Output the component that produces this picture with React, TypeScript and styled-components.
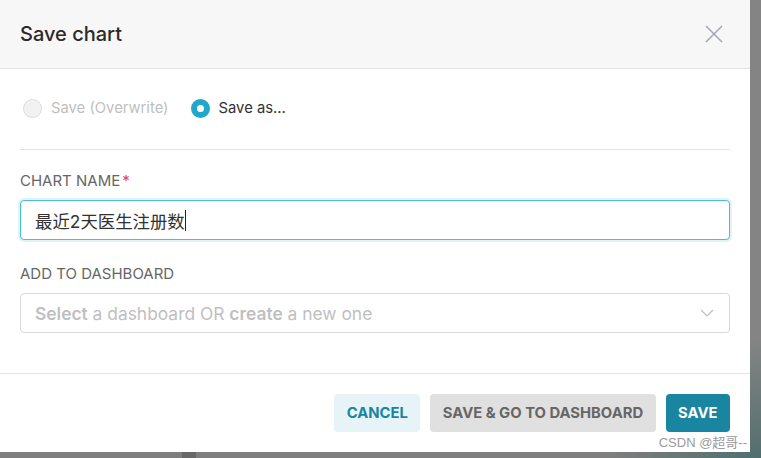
import React, { useState } from 'react';
import styled, { createGlobalStyle } from 'styled-components';

const GlobalStyle = createGlobalStyle`
  html, body {
    margin: 0;
    padding: 0;
    background: #828282;
    font-family: Inter, "Noto Sans CJK SC", sans-serif;
  }
  * { box-sizing: border-box; }
`;

const PRIMARY = '#1a85a0';

export default function App() {
  const [mode, setMode] = useState<'overwrite' | 'saveas'>('saveas');
  const [name, setName] = useState('最近2天医生注册数');

  return (
    <Page>
      <GlobalStyle />
      <Backdrop>
        <Modal>
          <Header>
            <Title>Save chart</Title>
            <CloseButton aria-label="close">
              <svg width="18" height="18" viewBox="0 0 18 18">
                <path d="M1 1L17 17M17 1L1 17" stroke="#a3a8b8" strokeWidth="1.6" />
              </svg>
            </CloseButton>
          </Header>
          <Body>
            <RadioRow>
              <RadioLabel disabled>
                <Radio checked={false} disabled />
                Save (Overwrite)
              </RadioLabel>
              <RadioLabel onClick={() => setMode('saveas')}>
                <Radio checked={mode === 'saveas'} />
                Save as...
              </RadioLabel>
            </RadioRow>
            <Divider />
            <FieldLabel>
              Chart name<Required>*</Required>
            </FieldLabel>
            <InputBox>
              <TextInput value={name} onChange={(e) => setName(e.target.value)} />
              <Caret />
            </InputBox>
            <FieldLabel>Add to dashboard</FieldLabel>
            <Select>
              <Placeholder>
                <b>Select</b> a dashboard OR <b>create</b> a new one
              </Placeholder>
              <svg width="14" height="8" viewBox="0 0 14 8">
                <path d="M1 1L7 7L13 1" stroke="#bdbdbd" strokeWidth="1.2" fill="none" />
              </svg>
            </Select>
          </Body>
          <Footer>
            <Button variant="secondary">Cancel</Button>
            <Button variant="default">Save &amp; go to dashboard</Button>
            <Button variant="primary">Save</Button>
          </Footer>
          <Watermark>CSDN @超哥--</Watermark>
        </Modal>
        <SideStrip />
      </Backdrop>
      <BottomStrip>
        <DarkPatch />
      </BottomStrip>
    </Page>
  );
}

const Page = styled.div`
  width: 761px;
  height: 458px;
  display: flex;
  flex-direction: column;
  overflow: hidden;
`;

const Backdrop = styled.div`
  display: flex;
  height: 452px;
`;

const SideStrip = styled.div`
  flex: 1;
  background: linear-gradient(to bottom, #848484 0%, #848484 75%, #56706f 100%);
`;

const BottomStrip = styled.div`
  flex: 1;
  display: flex;
  background: linear-gradient(to right, #7e7e7e 0%, #7e7e7e 80%, #506e6e 100%);
`;

const DarkPatch = styled.div`
  margin-left: 182px;
  width: 14px;
  background: #686868;
`;

const Modal = styled.div`
  position: relative;
  width: 750px;
  background: #fff;
  display: flex;
  flex-direction: column;
`;

const Header = styled.div`
  height: 69px;
  background: #f7f7f7;
  border-bottom: 1px solid #e3e3e3;
  display: flex;
  align-items: center;
  justify-content: space-between;
  padding: 0 27px 0 20px;
`;

const Title = styled.h4`
  margin: 0;
  font-size: 20px;
  font-weight: 500;
  color: #2a2a2a;
`;

const CloseButton = styled.button`
  border: none;
  background: none;
  padding: 0;
  display: flex;
  cursor: pointer;
`;

const Body = styled.div`
  display: flex;
  flex-direction: column;
  padding: 0 20px;
  height: 305px;
  border-bottom: 1px solid #e3e3e3;
`;

const RadioRow = styled.div`
  display: flex;
  gap: 22px;
  padding: 29px 3px 0;
  height: 80px;
`;

const RadioLabel = styled.label<{ disabled?: boolean }>`
  display: flex;
  align-items: center;
  gap: 9px;
  height: 20px;
  font-size: 14.8px;
  color: ${(p) => (p.disabled ? '#bfbfbf' : '#323232')};
  cursor: ${(p) => (p.disabled ? 'default' : 'pointer')};
`;

const Radio = styled.span<{ checked: boolean; disabled?: boolean }>`
  width: 19px;
  height: 19px;
  border-radius: 50%;
  background: ${(p) => (p.disabled ? '#f2f2f2' : '#fff')};
  border: ${(p) => (p.checked ? `6.5px solid #20a7c9` : '1.5px solid #dcdcdc')};
`;

const Divider = styled.div`
  height: 1px;
  background: #e3e3e3;
`;

const FieldLabel = styled.div`
  margin-top: 22px;
  margin-bottom: 10px;
  font-size: 15px;
  text-transform: uppercase;
  color: #666;
  line-height: 18px;
`;

const Required = styled.span`
  color: #e04355;
  margin-left: 2px;
`;

const InputBox = styled.div`
  position: relative;
  margin-bottom: 3px;
`;

const TextInput = styled.input`
  display: block;
  width: 100%;
  height: 40px;
  border: 1px solid #45bed6;
  border-radius: 4px;
  box-shadow: 0 0 0 2px #e0f3f8;
  padding: 0 14px;
  font-size: 17.4px;
  font-family: Inter, "Noto Sans CJK SC", sans-serif;
  color: #323232;
  outline: none;
`;

const Caret = styled.span`
  position: absolute;
  left: 165px;
  top: 10px;
  width: 1px;
  height: 21px;
  background: #222;
`;

const Select = styled.div`
  height: 40px;
  border: 1px solid #d9d9d9;
  border-radius: 4px;
  display: flex;
  align-items: center;
  justify-content: space-between;
  padding: 0 15px 0 14px;
`;

const Placeholder = styled.span`
  font-size: 17.4px;
  color: #bfbfbf;
  b {
    font-weight: 600;
  }
`;

const Footer = styled.div`
  display: flex;
  justify-content: flex-end;
  gap: 10px;
  padding: 20px 20px 0;
`;

const variants = {
  primary: { bg: PRIMARY, fg: '#fff' },
  secondary: { bg: '#e6f4f8', fg: PRIMARY },
  default: { bg: '#e0e0e0', fg: '#666' },
};

const Button = styled.button<{ variant: keyof typeof variants }>`
  height: 38px;
  padding: 0 12.5px;
  border: none;
  border-radius: 4px;
  font-family: Inter, sans-serif;
  font-size: 14.8px;
  font-weight: 700;
  text-transform: uppercase;
  background: ${(p) => variants[p.variant].bg};
  color: ${(p) => variants[p.variant].fg};
  cursor: pointer;
`;

const Watermark = styled.div`
  position: absolute;
  right: 3px;
  bottom: 1px;
  font-size: 13px;
  color: #9a9a9a;
  font-family: "Liberation Sans", "Noto Sans CJK SC", sans-serif;
`;
